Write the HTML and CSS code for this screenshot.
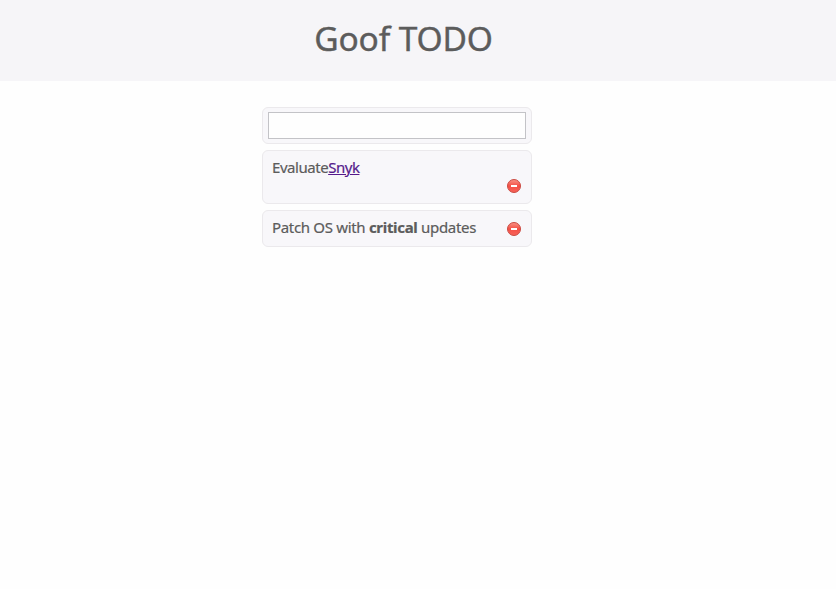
FILE: index.html
```html
<!DOCTYPE html>
<html lang="en">
<head>
<meta charset="utf-8">
<title>Goof TODO</title>
<link rel="stylesheet" href="styles.css">
</head>
<body>
<svg class="defs" width="0" height="0" aria-hidden="true">
  <defs>
    <linearGradient id="red" x1="0" y1="0" x2="0" y2="1"><stop offset="0" stop-color="#f99487"/><stop offset=".5" stop-color="#f44f45"/><stop offset="1" stop-color="#f8635a"/></linearGradient>
    <symbol id="remove" viewBox="0 0 14 14"><circle cx="7" cy="7" r="6.5" fill="url(#red)" stroke="#c94a42"/><rect x="4" y="6" width="6" height="2" fill="#fff"/></symbol>
  </defs>
</svg>
<header class="page-header"><h1 class="title">Goof TODO</h1></header>
<main class="list">
  <form class="item entry"><input class="input" type="text" aria-label="New item"></form>
  <div class="item tall">
    <div class="text">Evaluate<a class="link" href="#">Snyk</a></div>
    <a class="delete" href="#" aria-label="Delete"><svg width="14" height="14"><use href="#remove"/></svg></a>
  </div>
  <div class="item">
    <div class="text">Patch OS with <strong>critical</strong> updates</div>
    <a class="delete" href="#" aria-label="Delete"><svg width="14" height="14"><use href="#remove"/></svg></a>
  </div>
</main>
</body>
</html>
```
FILE: styles.css
```css
* { box-sizing: border-box; }
body { margin: 0; background: #fefefe; color: #5c5c5c; font-family: "Noto Sans", "Open Sans", sans-serif; }
.defs { display: block; }
.page-header { height: 81px; background: #f6f5f8; padding: 14px 29px 0 0; }
.title { margin: 0; font-size: 33.5px; line-height: 48px; font-weight: 400; text-align: center; letter-spacing: -0.15px; -webkit-text-stroke: 0.4px #5c5c5c; }
.list { width: 270px; margin: 26px 0 0 262px; display: flex; flex-direction: column; gap: 6px; }
.item { display: flex; justify-content: space-between; height: 37px; padding: 6px 10px 0 9px; border: 1px solid #ebe9ec; border-radius: 6px; background: #f8f7fa; font-size: 15px; line-height: 20px; }
.text { letter-spacing: -0.32px; -webkit-text-stroke: 0.2px currentColor; white-space: nowrap; }
.entry { padding: 4px 5px; }
.input { width: 258px; height: 27px; padding: 0 4px; border: 1px solid #c3c3c7; border-radius: 0; background: #fefefe; outline: none; font: inherit; }
.tall { height: 54px; flex-direction: column; justify-content: flex-start; }
.tall .text { letter-spacing: -0.46px; }
.link { color: #551a8b; text-decoration: underline; }
.delete { display: block; width: 14px; height: 14px; margin-top: 5px; line-height: 0; }
.tall .delete { align-self: flex-end; margin-top: 2px; }
```
